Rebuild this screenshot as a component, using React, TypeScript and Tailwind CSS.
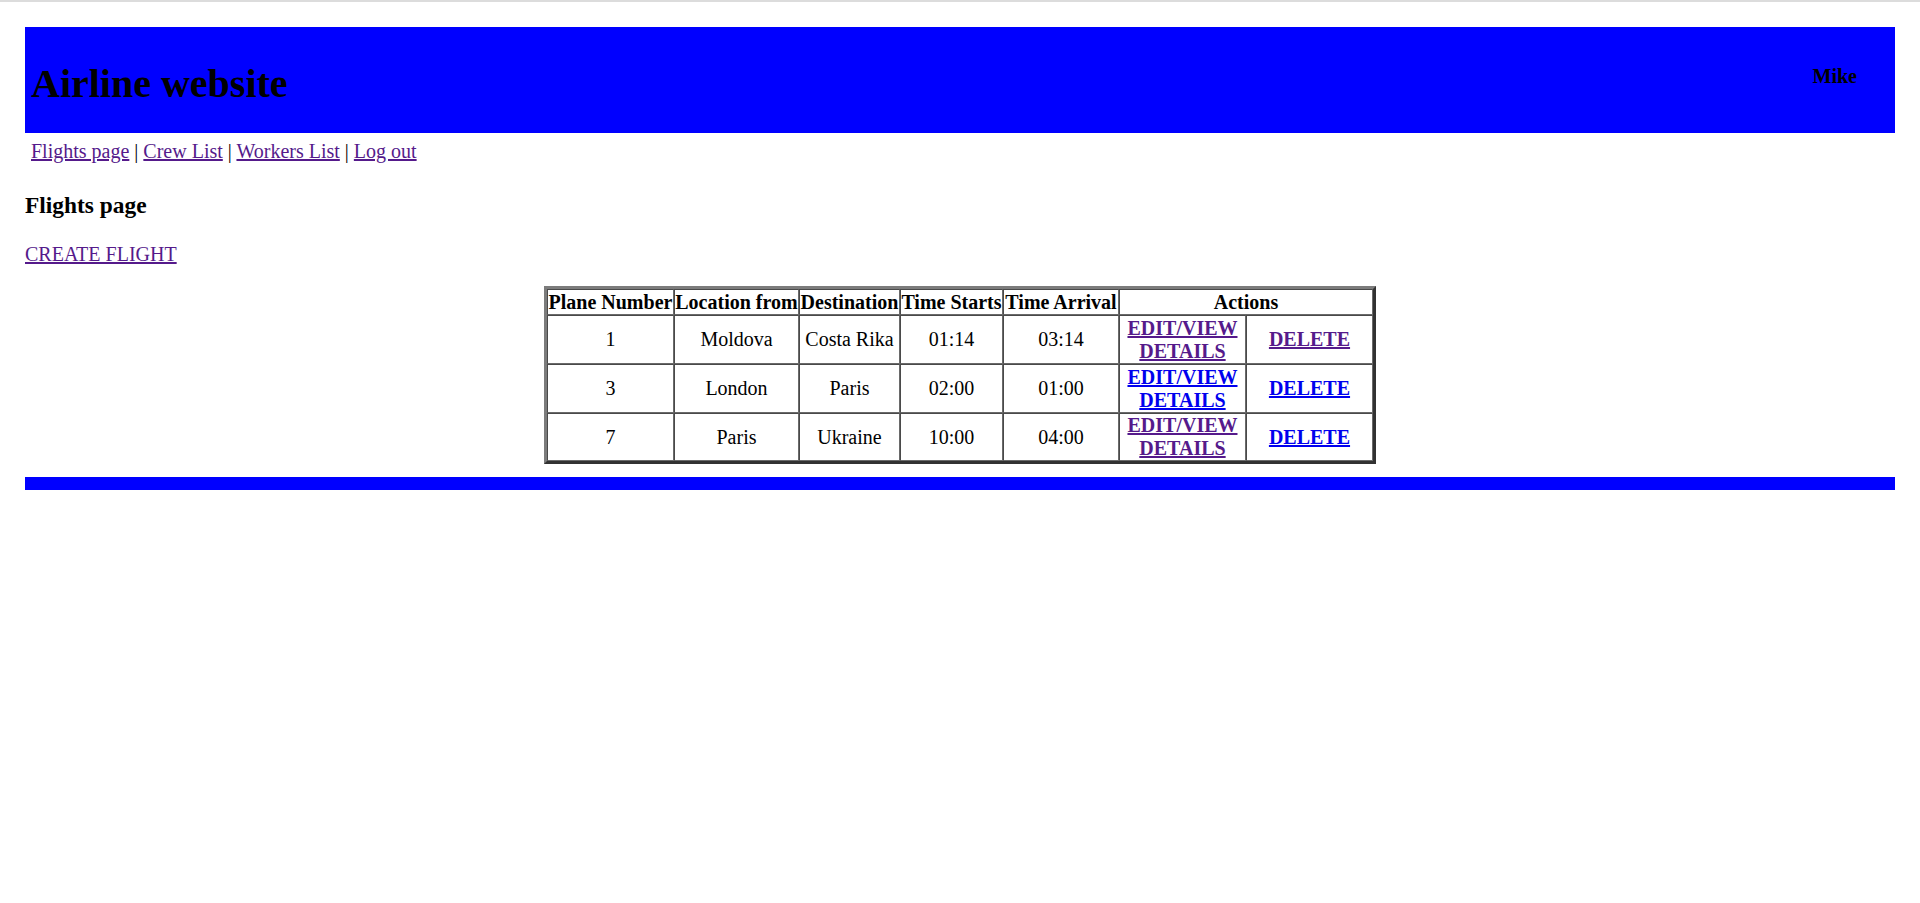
import React from "react";

const rows = [
  { n: "1", from: "Moldova", to: "Costa Rika", s: "01:14", a: "03:14", editV: true, delV: true, h: "h-[49px]" },
  { n: "3", from: "London", to: "Paris", s: "02:00", a: "01:00", editV: false, delV: false, h: "h-[49px]" },
  { n: "7", from: "Paris", to: "Ukraine", s: "10:00", a: "04:00", editV: true, delV: false, h: "h-[48px]" },
];

export default function App() {
  const cell = "border border-t-[#4a4a4a] border-l-[#4a4a4a] border-r-[#6a6a6a] border-b-[#6a6a6a] p-0 text-center align-middle";
  return (
    <div className="min-h-[903px] bg-white font-['Liberation_Serif','Times_New_Roman',serif] text-[20px] leading-[23px] text-black">
      <div className="h-[2px] bg-[#dcdcdc]" />
      <div className="px-[25px] pt-[25px]">
        <header className="flex items-start justify-between bg-[#0000ff]">
          <h1 className="pl-[6px] pt-[34px] pb-[26px] text-[40px] leading-[46px] font-bold">Airline website</h1>
          <div className="mt-[38px] mr-[38px] text-[20px] leading-[23px] font-bold">Mike</div>
        </header>
        <nav className="mt-[7px] pl-[6px] leading-[23px]">
          <a href="#" className="text-[#551a8b] underline">Flights page</a>{" | "}
          <a href="#" className="text-[#551a8b] underline">Crew List</a>{" | "}
          <a href="#" className="text-[#551a8b] underline">Workers List</a>{" | "}
          <a href="#" className="text-[#551a8b] underline">Log out</a>
        </nav>
        <h3 className="mt-[29px] text-[23.4px] leading-[27px] font-bold">Flights page</h3>
        <div className="mt-[24px] leading-[23px]">
          <a href="#" className="text-[#551a8b] underline">CREATE FLIGHT</a>
        </div>
        <table className="mx-auto mt-[20px] w-[832px] table-fixed border-separate border-spacing-0 border-[3px] border-t-[#7c7c7c] border-l-[#7c7c7c] border-r-[#323232] border-b-[#323232]">
          <colgroup>
            <col className="w-[127px]" />
            <col className="w-[125px]" />
            <col className="w-[101px]" />
            <col className="w-[103px]" />
            <col className="w-[116px]" />
            <col className="w-[127px]" />
            <col className="w-[127px]" />
          </colgroup>
          <thead>
            <tr className="h-[26px]">
              <th className={cell + " font-bold whitespace-nowrap"}>Plane Number</th>
              <th className={cell + " font-bold whitespace-nowrap"}>Location from</th>
              <th className={cell + " font-bold whitespace-nowrap"}>Destination</th>
              <th className={cell + " font-bold whitespace-nowrap"}>Time Starts</th>
              <th className={cell + " font-bold whitespace-nowrap"}>Time Arrival</th>
              <th colSpan={2} className={cell + " font-bold"}>Actions</th>
            </tr>
          </thead>
          <tbody>
            {rows.map((r) => (
              <tr key={r.n} className={r.h}>
                <td className={cell}>{r.n}</td>
                <td className={cell}>{r.from}</td>
                <td className={cell}>{r.to}</td>
                <td className={cell}>{r.s}</td>
                <td className={cell}>{r.a}</td>
                <td className={cell}>
                  <a href="#" className={(r.editV ? "text-[#551a8b]" : "text-[#0000ee]") + " font-bold underline"}>EDIT/VIEW DETAILS</a>
                </td>
                <td className={cell}>
                  <a href="#" className={(r.delV ? "text-[#551a8b]" : "text-[#0000ee]") + " font-bold underline"}>DELETE</a>
                </td>
              </tr>
            ))}
          </tbody>
        </table>
        <div className="mt-[13px] h-[13px] bg-[#0000ff]" />
      </div>
    </div>
  );
}
